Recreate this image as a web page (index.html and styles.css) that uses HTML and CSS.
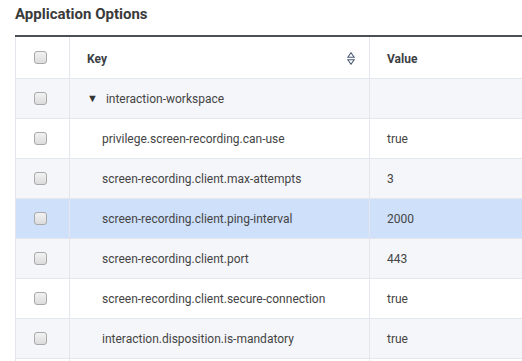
FILE: index.html
```html
<!DOCTYPE html>
<html lang="en">
<head>
    <meta charset="UTF-8">
    <title>Application Options</title>
    <link rel="stylesheet" href="styles.css">
</head>
<body>
    <div class="page">
        <h2>Application Options</h2>

        <table class="options">
            <thead>
                <tr>
                    <th class="check"><span class="box"></span></th>
                    <th class="key">
                        <div class="key-head">
                            Key
                            <svg class="sort" width="8" height="13" viewBox="0 0 8 13">
                                <path d="M4 0.8 L7.2 5.3 H0.8 Z" fill="none" stroke="#4a5a75" stroke-width="1.1"/>
                                <path d="M4 12.2 L7.2 7.7 H0.8 Z" fill="none" stroke="#4a5a75" stroke-width="1.1"/>
                            </svg>
                        </div>
                    </th>
                    <th class="value">Value</th>
                </tr>
            </thead>
            <tbody>
                <tr>
                    <td class="check"><span class="box"></span></td>
                    <td><span class="caret">&#9660;</span>interaction-workspace</td>
                    <td></td>
                </tr>
                <tr>
                    <td class="check"><span class="box"></span></td>
                    <td class="child">privilege.screen-recording.can-use</td>
                    <td>true</td>
                </tr>
                <tr>
                    <td class="check"><span class="box"></span></td>
                    <td class="child">screen-recording.client.max-attempts</td>
                    <td>3</td>
                </tr>
                <tr class="selected">
                    <td class="check"><span class="box"></span></td>
                    <td class="child">screen-recording.client.ping-interval</td>
                    <td>2000</td>
                </tr>
                <tr>
                    <td class="check"><span class="box"></span></td>
                    <td class="child">screen-recording.client.port</td>
                    <td>443</td>
                </tr>
                <tr>
                    <td class="check"><span class="box"></span></td>
                    <td class="child">screen-recording.client.secure-connection</td>
                    <td>true</td>
                </tr>
                <tr>
                    <td class="check"><span class="box"></span></td>
                    <td class="child">interaction.disposition.is-mandatory</td>
                    <td>true</td>
                </tr>
                <tr>
                    <td class="check"><span class="box"></span></td>
                    <td class="child"></td>
                    <td></td>
                </tr>
            </tbody>
        </table>
    </div>
</body>
</html>
```

FILE: styles.css
```css
* {
    margin: 0;
    padding: 0;
    box-sizing: border-box;
}

body {
    font-family: Roboto, 'Noto Sans', sans-serif;
    background: white;
    color: #444;
    overflow: hidden;
}

.page {
    padding: 5px 0 0 15px;
}

h2 {
    font-size: 15px;
    font-weight: bold;
    color: #3a3a3a;
    height: 30px;
    line-height: 19px;
}

.options {
    width: 620px;
    border-collapse: collapse;
    table-layout: fixed;
    border-top: 2px solid #4b5058;
    font-size: 12px;
}

.options th,
.options td {
    height: 40px;
    text-align: left;
    border-left: 1px solid #e3e6ec;
    border-bottom: 1px solid #e3e6ec;
    padding: 0 0 0 17px;
    white-space: nowrap;
}

.options th {
    height: 42px;
    padding-top: 3px;
    font-weight: bold;
    color: #3b3f45;
}

.options td {
    padding-top: 2px;
}

.options .check {
    width: 54px;
    padding: 0 4px 0 0;
    text-align: center;
}

.options .key {
    width: 300px;
}

.key-head {
    display: flex;
    align-items: center;
    justify-content: space-between;
    padding-right: 14px;
}

.sort {
    display: block;
}

.options tbody tr:nth-child(odd) {
    background: #f5f6fa;
}

.options tbody tr.selected {
    background: #cfe0fb;
}

.options td.child {
    padding-left: 32px;
}

.caret {
    font-size: 11px;
    color: #333;
    margin-right: 8px;
    vertical-align: 1px;
}

.box {
    display: inline-block;
    width: 13px;
    height: 13px;
    border: 1px solid #a9a9a9;
    border-radius: 3px;
    background: linear-gradient(#f2f2f2, #dcdcdc);
    vertical-align: middle;
}
```
